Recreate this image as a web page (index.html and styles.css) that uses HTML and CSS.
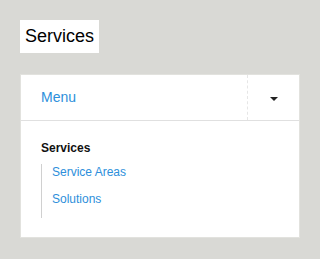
FILE: index.html
```html
<!DOCTYPE html>
<html lang="en">
<head>
    <meta charset="UTF-8">
    <meta name="viewport" content="width=device-width, initial-scale=1.0">
    <title>Services</title>
    <link rel="stylesheet" href="styles.css">
</head>
<body>
    <h1 class="page-title">Services</h1>

    <div class="menu-card">
        <div class="menu-head">
            <a class="menu-label" href="#">Menu</a>
            <button class="menu-toggle" type="button"><span class="caret"></span></button>
        </div>
        <div class="menu-body">
            <h2>Services</h2>
            <ul class="sub-links">
                <li><a href="#">Service Areas</a></li>
                <li><a href="#">Solutions</a></li>
            </ul>
        </div>
    </div>
</body>
</html>
```

FILE: styles.css
```css
body {
    font-family: 'Liberation Sans', Arial, sans-serif;
    margin: 0;
    padding: 20px;
    background-color: #d9d9d5;
}

.page-title {
    display: inline-block;
    margin: 0;
    padding: 6px 5px;
    font-size: 18px;
    line-height: 21px;
    font-weight: normal;
    color: #000;
    background-color: #fff;
}

.menu-card {
    margin-top: 21px;
    width: 278px;
    background-color: #fff;
    border: 1px solid #e2e2de;
}

.menu-head {
    display: flex;
    height: 45px;
    border-bottom: 1px solid #e0e0e0;
}

.menu-label {
    flex: 1;
    padding-left: 20px;
    font-size: 14px;
    line-height: 45px;
    color: #2d8fdb;
    text-decoration: none;
}

.menu-toggle {
    width: 52px;
    padding: 2px 0 0;
    display: flex;
    align-items: center;
    justify-content: center;
    background: none;
    border: none;
    border-left: 1px dashed #e6e6e6;
    cursor: pointer;
}

.caret {
    width: 0;
    height: 0;
    border-left: 4px solid transparent;
    border-right: 4px solid transparent;
    border-top: 4px solid #222;
}

.menu-body {
    padding: 20px 20px 19px;
}

.menu-body h2 {
    margin: 0 0 9px;
    font-size: 12px;
    line-height: 14px;
    color: #111;
}

.sub-links {
    list-style: none;
    margin: 0;
    padding: 0 0 0 10px;
    border-left: 1px solid #d0d0d0;
}

.sub-links li {
    padding: 1px 0 12px;
    font-size: 12px;
    line-height: 14px;
}

.sub-links a {
    color: #2d8fdb;
    text-decoration: none;
}
```
